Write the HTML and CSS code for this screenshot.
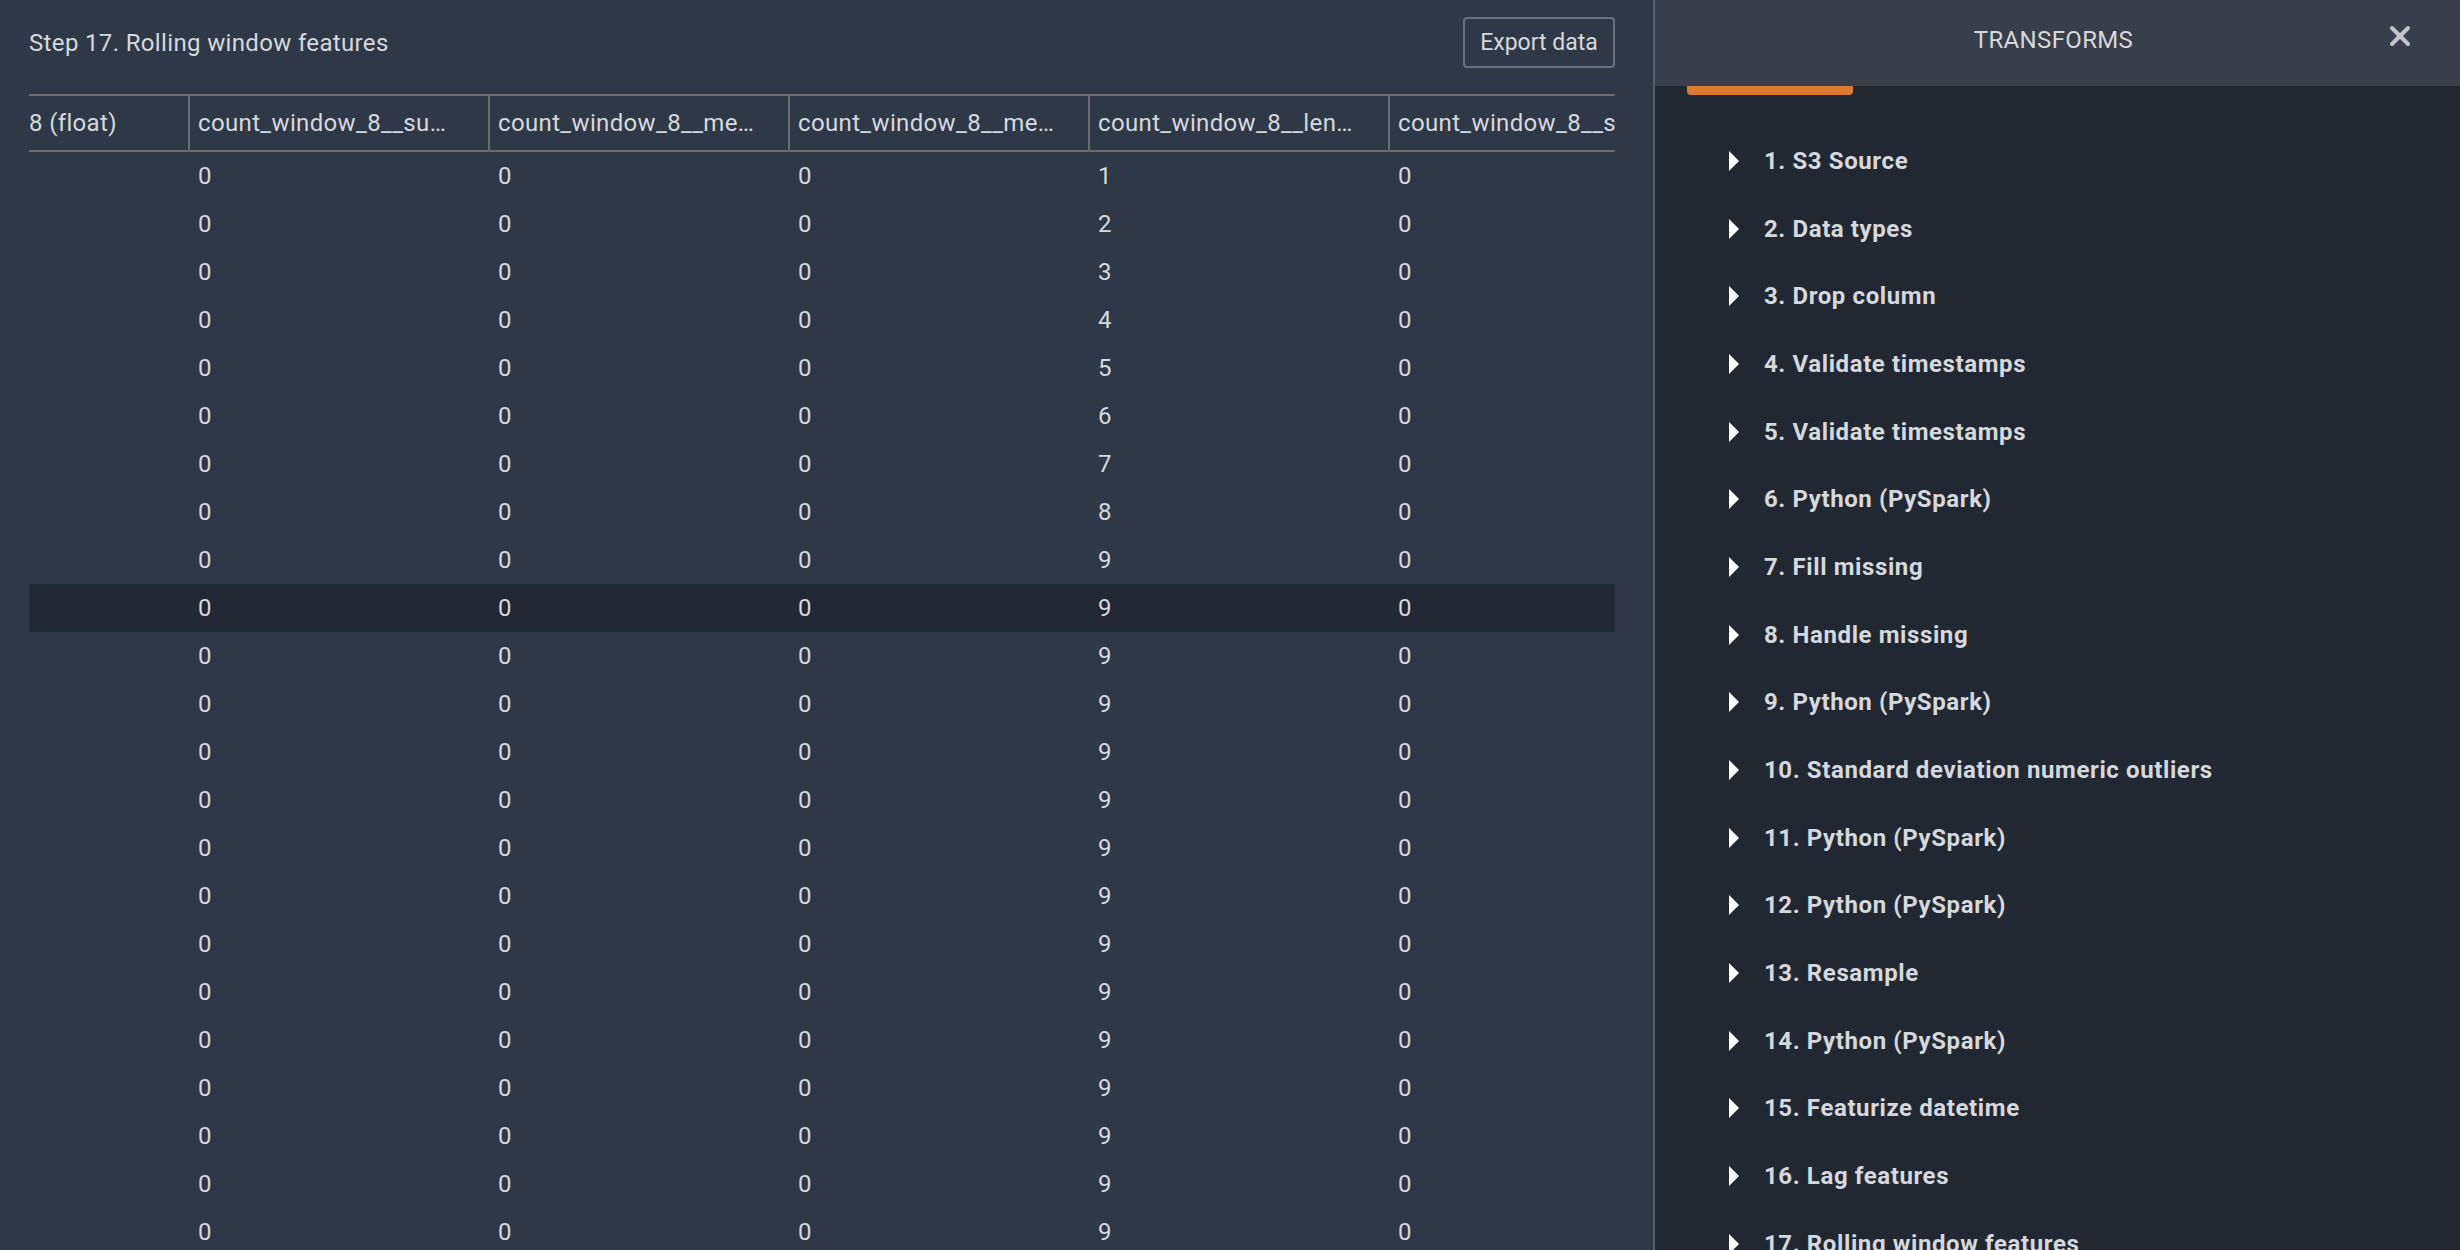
FILE: index.html
```html
<!DOCTYPE html>
<html lang="en">
<head>
<meta charset="utf-8">
<title>Step 17. Rolling window features</title>
<link rel="stylesheet" href="styles.css">
</head>
<body>
<div class="app">
  <main class="main">
    <div class="toolbar">
      <h1 class="title">Step 17. Rolling window features</h1>
      <button class="btn">Export data</button>
    </div>
    <div class="grid">
      <div class="grid-inner">
        <div class="row head">
          <div class="cell first">8 (float)</div>
          <div class="cell">count_window_8__su…</div>
          <div class="cell">count_window_8__me…</div>
          <div class="cell">count_window_8__me…</div>
          <div class="cell">count_window_8__len…</div>
          <div class="cell last">count_window_8__std</div>
        </div>
        <div id="rows"></div>
      </div>
    </div>
  </main>
  <aside class="panel">
    <header class="panel-head">
      <span class="panel-title">TRANSFORMS</span>
      <button class="close" aria-label="Close">
        <svg width="22" height="22" viewBox="0 0 22 22"><path d="M3 3 L19 19 M19 3 L3 19" stroke="#c3c5c9" stroke-width="4" stroke-linecap="round" fill="none"/></svg>
      </button>
    </header>
    <div class="tab-mark"></div>
    <ul class="steps" id="steps"></ul>
  </aside>
</div>
<script src="app.js"></script>
</body>
</html>
```
FILE: styles.css
```css
* { box-sizing: border-box; }
html, body { margin: 0; padding: 0; height: 100%; overflow: hidden; }
body {
  background: #2f3847;
  color: #d5d8dc;
  font-family: Roboto, "Liberation Sans", sans-serif;
  font-size: 24px;
  letter-spacing: 0.35px;
}
.app { display: flex; height: 1250px; }
.main {
  width: 1653px;
  flex: 0 0 1653px;
  padding: 17px 38px 0 29px;
  overflow: hidden;
}
.toolbar {
  display: flex;
  align-items: center;
  justify-content: space-between;
  height: 51px;
  margin-bottom: 26px;
}
.title {
  margin: 0;
  font-size: 24px;
  font-weight: 400;
  color: #d5d8dc;
}
.btn {
  height: 51px;
  width: 152px;
  background: transparent;
  border: 2px solid #6b7079;
  border-radius: 4px;
  color: #d5d8dc;
  font-family: inherit;
  font-size: 23px;
  letter-spacing: 0;
  padding: 0;
}
.grid { overflow: hidden; width: 100%; }
.grid-inner { width: 1800px; }
.row { display: flex; height: 48px; align-items: center; }
.row.sel { background: #222833; }
.head {
  height: 58px;
  border-top: 2px solid #6b6b6b;
  border-bottom: 2px solid #6b6b6b;
  align-items: stretch;
}
.cell {
  flex: 0 0 300px;
  width: 300px;
  padding-left: 8px;
  white-space: nowrap;
  overflow: hidden;
}
.cell.first { flex-basis: 161px; width: 161px; padding-left: 0; }
.head .cell {
  display: flex;
  align-items: center;
  border-right: 2px solid #6b6b6b;
}
.head .cell.last { border-right: none; }
.panel {
  flex: 1 1 auto;
  background: #222832;
  border-left: 2px solid #5c6169;
  position: relative;
  overflow: hidden;
}
.panel-head {
  height: 86px;
  background: #393f4a;
  display: flex;
  align-items: center;
  justify-content: center;
  padding-right: 8px;
  position: relative;
}
.panel-title {
  font-size: 24px;
  color: #d5d8dc;
  margin-top: -6px;
}
.close {
  position: absolute;
  right: 49px;
  top: 25px;
  width: 22px;
  height: 22px;
  padding: 0;
  border: none;
  background: transparent;
  display: block;
}
.close svg { display: block; }
.tab-mark {
  position: absolute;
  left: 32px;
  top: 86px;
  width: 166px;
  height: 9px;
  background: #dd7a31;
  border-radius: 0 0 4px 4px;
}
.steps {
  list-style: none;
  margin: 0;
  padding: 41px 0 0 74px;
}
.step {
  height: 67.7px;
  display: flex;
  align-items: center;
  gap: 25px;
  font-weight: 700;
  letter-spacing: 0.6px;
  color: #d5d8dc;
  white-space: nowrap;
}
.step svg { display: block; flex: 0 0 10px; }
```
FILE: app.js
```js
var lens = [1,2,3,4,5,6,7,8,9,9,9,9,9,9,9,9,9,9,9,9,9,9,9,9,9];
var rows = document.getElementById('rows');
lens.forEach(function (n, i) {
  var r = document.createElement('div');
  r.className = 'row' + (i === 9 ? ' sel' : '');
  r.innerHTML = '<div class="cell first"></div><div class="cell">0</div><div class="cell">0</div><div class="cell">0</div><div class="cell">' + n + '</div><div class="cell">0</div>';
  rows.appendChild(r);
});
var steps = ['1. S3 Source','2. Data types','3. Drop column','4. Validate timestamps','5. Validate timestamps','6. Python (PySpark)','7. Fill missing','8. Handle missing','9. Python (PySpark)','10. Standard deviation numeric outliers','11. Python (PySpark)','12. Python (PySpark)','13. Resample','14. Python (PySpark)','15. Featurize datetime','16. Lag features','17. Rolling window features'];
var ul = document.getElementById('steps');
steps.forEach(function (s) {
  var li = document.createElement('li');
  li.className = 'step';
  li.innerHTML = '<svg width="10" height="20" viewBox="0 0 10 20"><path d="M0 0 L10 10 L0 20 Z" fill="#ffffff"/></svg><span>' + s + '</span>';
  ul.appendChild(li);
});
```
